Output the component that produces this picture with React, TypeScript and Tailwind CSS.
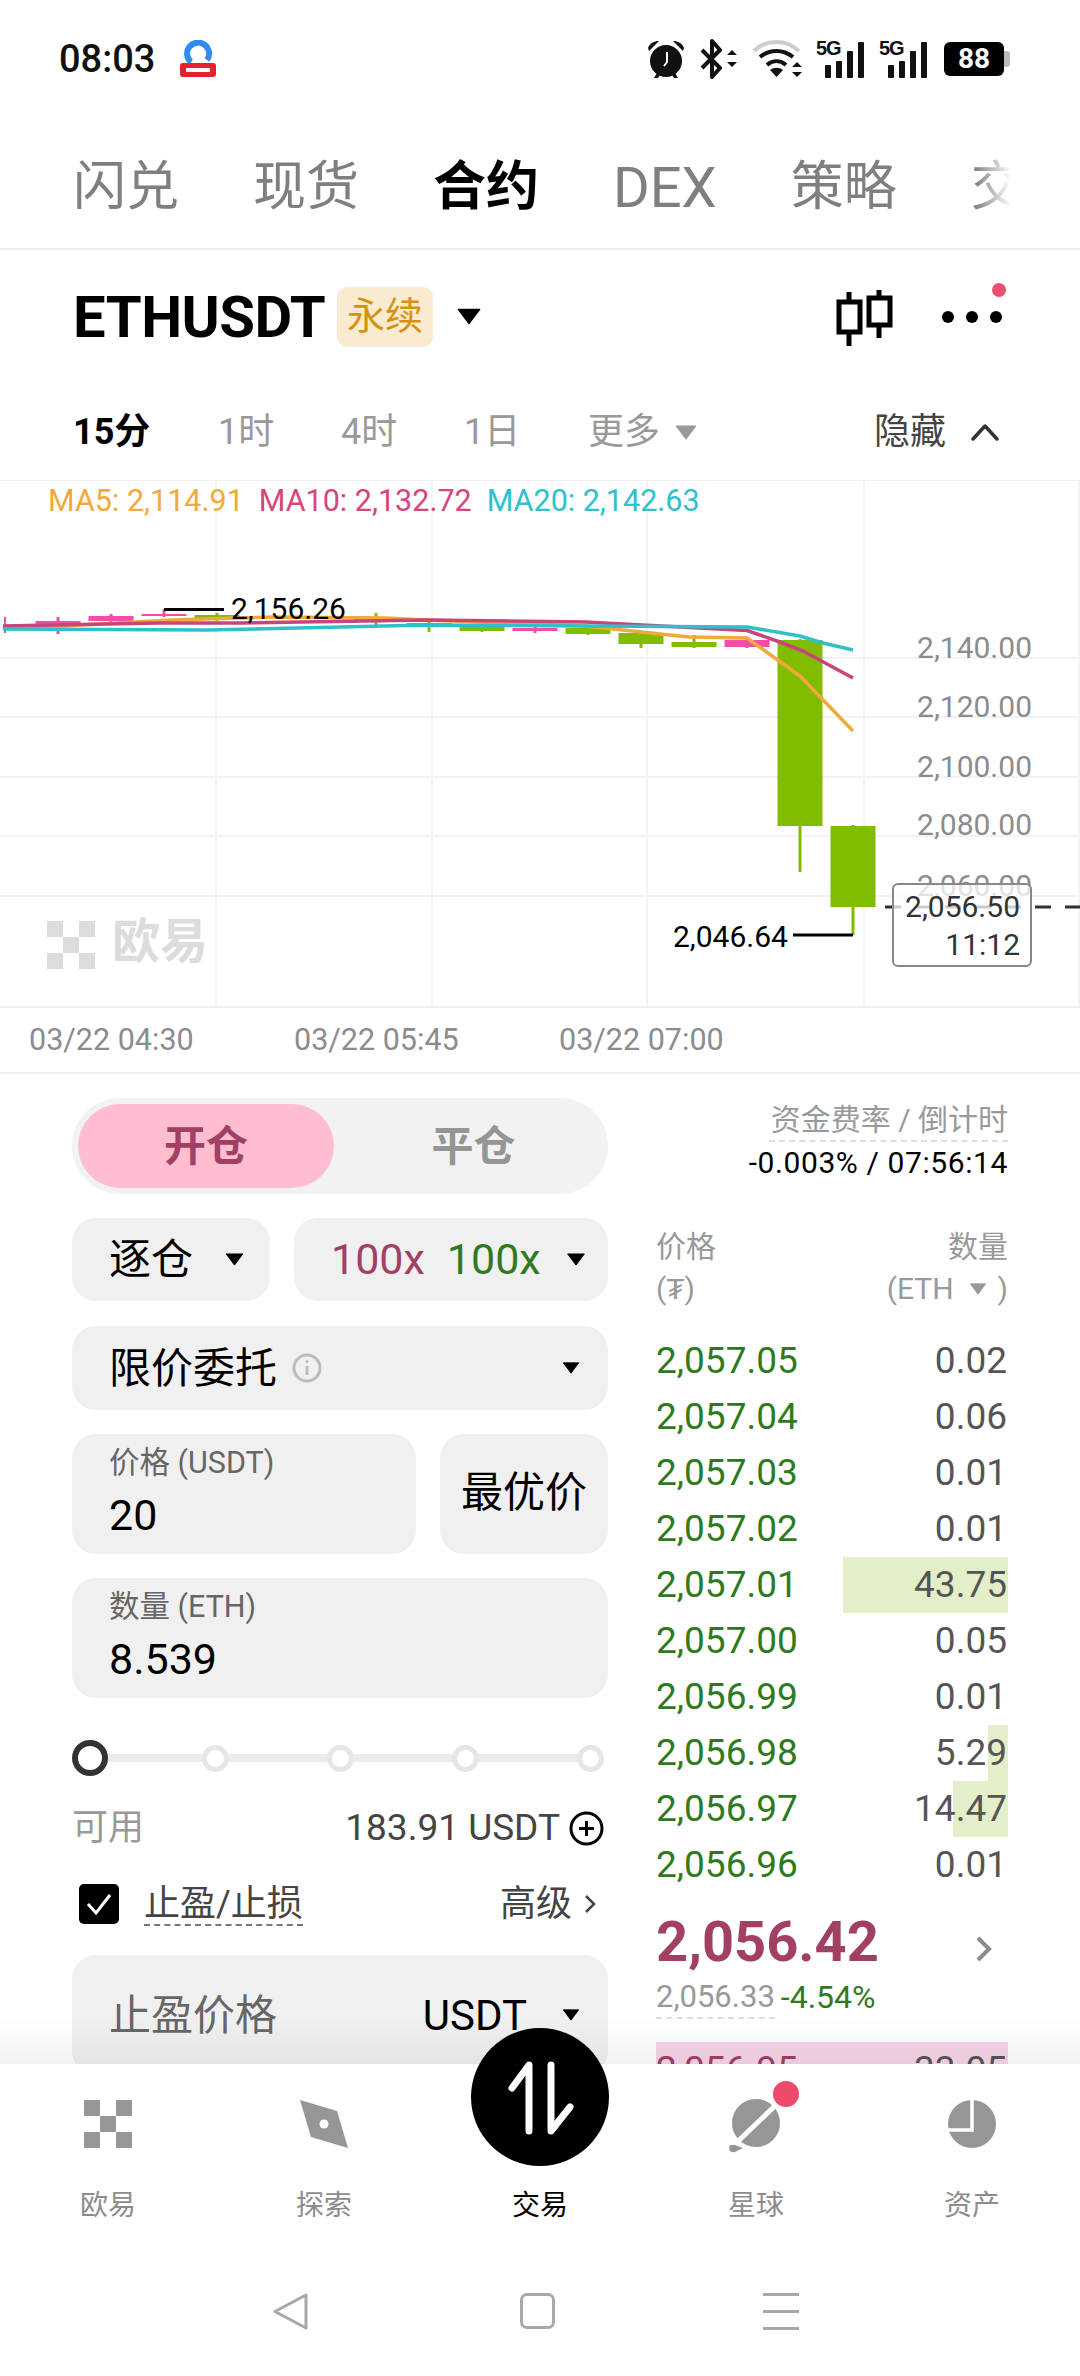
import React from 'react';

const Caret = ({ className = 'w-[20px] h-[14px] text-black' }: { className?: string }) => (
  <svg className={className} viewBox="0 0 20 14" fill="currentColor">
    <path d="M1 1h18L10 13z" stroke="currentColor" strokeLinejoin="round" />
  </svg>
);

const StatusIcons = () => (
  <div className="flex items-center">
    {/* alarm */}
    <svg className="w-[38px] h-[40px]" viewBox="0 0 38 40" fill="#111">
      <circle cx="19" cy="22" r="16" />
      <path d="M1 9c2-5 6-7 11-7L2 12zM37 9c-2-5-6-7-11-7l10 10zM7 39l3-5 3 2-2 3zM31 39l-3-5-3 2 2 3z" />
      <path d="M20 13v10l-3 4" stroke="#fff" strokeWidth="2" fill="none" />
    </svg>
    {/* bluetooth */}
    <svg className="w-[38px] h-[40px] ml-[15px]" viewBox="0 0 38 40" fill="none">
      <path d="M2 11l18 18-8 9V2l8 9L2 29" stroke="#111" strokeWidth="4" strokeLinejoin="round" />
      <path d="M27 16l5-5 5 5zM27 23l5 5 5-5z" fill="#111" />
    </svg>
    {/* wifi */}
    <svg className="w-[52px] h-[40px] ml-[14px]" viewBox="0 0 52 40" fill="none">
      <path d="M2 12C14 0 34 0 47 12" stroke="#ccc" strokeWidth="4" />
      <path d="M8 18c10-8 23-8 33 0" stroke="#111" strokeWidth="4" />
      <path d="M15 26c6-5 13-5 19 0" stroke="#111" strokeWidth="4" />
      <path d="M18 31c4-3 9-3 13 0l-6.500 7z" fill="#111" />
      <path d="M40 28l5-5 5 5zM40 33l5 5 5-5z" fill="#111" />
    </svg>
    {/* 5G signal x 2 */}
    {[0, 1].map((n) => (
      <div key={n} className={`relative w-[48px] h-[38px] ${n === 0 ? 'ml-[12px]' : 'ml-[15px]'}`}>
        <span className="absolute left-0 top-[-3px] text-[20px] leading-[22px] font-bold text-[#111] tracking-[-1px] [font-family:'Liberation_Sans',sans-serif]">5G</span>
        <div className="absolute left-[9px] right-0 bottom-0 flex items-end justify-between">
          <div className="w-[6px] h-[13px] bg-[#111] rounded-[1px]" />
          <div className="w-[6px] h-[17px] bg-[#111] rounded-[1px]" />
          <div className="w-[6px] h-[27px] bg-[#111] rounded-[1px]" />
          <div className="w-[6px] h-[36px] bg-[#111] rounded-[1px]" />
        </div>
      </div>
    ))}
    {/* battery */}
    <div className="flex items-center ml-[17px]">
      <div className="w-[60px] h-[34px] bg-black rounded-[6px] flex items-center justify-center text-white text-[28px] font-bold leading-none">88</div>
      <div className="w-[6px] h-[16px] bg-[#bbb] rounded-r-[3px]" />
    </div>
  </div>
);

const TopTabs = () => (
  <div className="relative h-[145px] border-b-2 border-[#ececec] pl-[73px] overflow-hidden">
    <div className="flex gap-[74px] h-[165px] items-center text-[53px] text-[#7f7f7f] whitespace-nowrap w-[937px] overflow-hidden">
      <span>闪兑</span>
      <span>现货</span>
      <span className="text-black font-bold">合约</span>
      <span className="w-[106px] text-[56px]">DEX</span>
      <span>策略</span>
      <span>交易</span>
    </div>
    <div className="absolute top-0 bottom-0 left-[975px] w-[36px] bg-gradient-to-r from-white/0 to-white" />
  </div>
);

const SymbolRow = () => (
  <div className="relative h-[130px] flex items-center pl-[73px] pt-[3px]">
    <span className="text-[58px] font-bold text-black leading-none tracking-[-0.5px] w-[250px] shrink-0 whitespace-nowrap">ETHUSDT</span>
    <span className="ml-[14px] w-[96px] h-[60px] rounded-[10px] bg-[#f9ebcf] text-[#d4920f] text-[38px] flex items-center justify-center">永续</span>
    <Caret className="ml-[24px] w-[24px] h-[17px] text-black" />
    <svg className="absolute left-[835px] top-[40px] w-[60px] h-[58px]" viewBox="0 0 60 58" fill="none" stroke="#000" strokeWidth="5">
      <path d="M14 2v54M44 0v48" />
      <rect x="4" y="12" width="21" height="30" fill="#fff" />
      <rect x="34" y="8" width="21" height="27" fill="#fff" />
    </svg>
    <div className="absolute left-[942px] top-[61px] flex gap-[12px]">
      <div className="w-[12px] h-[12px] rounded-full bg-black" />
      <div className="w-[12px] h-[12px] rounded-full bg-black" />
      <div className="w-[12px] h-[12px] rounded-full bg-black" />
    </div>
    <div className="absolute left-[992px] top-[33px] w-[14px] h-[14px] rounded-full bg-[#ea4f72]" />
  </div>
);

const TimeRow = () => (
  <div className="h-[100px] flex items-center pl-[73px] pt-[4px] text-[36px] text-[#999] relative">
    <span className="w-[145px] font-bold text-black">15分</span>
    <span className="w-[123px]">1时</span>
    <span className="w-[123px]">4时</span>
    <span className="w-[124px]">1日</span>
    <span>更多</span>
    <Caret className="ml-[14px] w-[24px] h-[15px] text-[#999]" />
    <span className="absolute left-[874px] text-[#444]">隐藏</span>
    <svg className="absolute left-[970px] w-[30px] h-[22px]" viewBox="0 0 30 22" fill="none" stroke="#333" strokeWidth="3.500" strokeLinecap="round" strokeLinejoin="round">
      <path d="M3 18L15 5l12 13" />
    </svg>
  </div>
);

type Candle = { x: number; top: number; bot: number; wt: number; wb: number; up: boolean };

const candles: Candle[] = [
  { x: 58, top: 620, bot: 625, wt: 616, wb: 633, up: false },
  { x: 111, top: 615, bot: 620, wt: 613, wb: 622, up: false },
  { x: 164, top: 613, bot: 615, wt: 608, wb: 616, up: false },
  { x: 217, top: 614, bot: 618, wt: 612, wb: 620, up: true },
  { x: 376, top: 618, bot: 620, wt: 612, wb: 624, up: true },
  { x: 429, top: 622, bot: 625, wt: 620, wb: 631, up: true },
  { x: 482, top: 625, bot: 630, wt: 624, wb: 631, up: true },
  { x: 535, top: 627, bot: 630, wt: 625, wb: 632, up: false },
  { x: 588, top: 627, bot: 633, wt: 626, wb: 634, up: true },
  { x: 641, top: 632, bot: 643, wt: 631, wb: 647, up: true },
  { x: 694, top: 641, bot: 646, wt: 634, wb: 647, up: true },
  { x: 747, top: 639, bot: 646, wt: 637, wb: 647, up: false },
  { x: 800, top: 639, bot: 825, wt: 638, wb: 871, up: true },
  { x: 853, top: 825, bot: 906, wt: 824, wb: 934, up: true },
];

const axisPrices = [
  { label: '2,140.00', cls: 'top-[147px]' },
  { label: '2,120.00', cls: 'top-[206px]' },
  { label: '2,100.00', cls: 'top-[266px]' },
  { label: '2,080.00', cls: 'top-[324px]' },
  { label: '2,060.00', cls: 'top-[385px]' },
];

const Chart = () => (
  <div className="relative h-[526px] border-t border-[#f2f2f2]">
    <svg className="absolute inset-0 w-[1080px] h-[526px]" viewBox="0 480 1080 526">
      {[657, 716, 776, 835, 895].map((y) => (
        <line key={y} x1="0" x2="1080" y1={y} y2={y} stroke="#f2f2f2" strokeWidth="2" />
      ))}
      {[216, 432, 647, 864, 1079].map((x) => (
        <line key={x} x1={x} x2={x} y1="480" y2="1006" stroke="#f4f4f4" strokeWidth="2" />
      ))}
      {candles.map((c) => {
        const color = c.up ? '#82bc00' : '#f54ca8';
        return (
          <g key={c.x} fill={color}>
            <rect x={c.x - 1.5} y={c.wt} width="3" height={c.wb - c.wt} />
            <rect x={c.x - 22.5} y={c.top} width="45" height={c.bot - c.top} />
          </g>
        );
      })}
      <rect x="4" y="616" width="2" height="16" fill="#f54ca8" />
      <path d="M3 625.500L62 625L172 619L275 616L386 617L427 619L585 625L689 636L747 637L800 675L853 730" fill="none" stroke="#f2a93b" strokeWidth="3.500" />
      <path d="M3 625L158 622L241 622L427 619L585 621L747 629.500L777 640L803 650L853 677" fill="none" stroke="#c8457a" strokeWidth="3.500" />
      <path d="M3 628L207 629L427 624L747 626L800 635L823 642L853 649" fill="none" stroke="#2fc0cc" strokeWidth="3.500" />
      <line x1="164" x2="224" y1="608.500" y2="608.500" stroke="#000" strokeWidth="3" />
      <line x1="793" x2="853" y1="934" y2="934" stroke="#000" strokeWidth="3" />
      <line x1="885" x2="1080" y1="906" y2="906" stroke="#333" strokeWidth="3" strokeDasharray="16 14" />
      {/* OKX watermark */}
      <g fill="#dcdcdc">
        <rect x="47" y="920" width="16" height="16" />
        <rect x="79" y="920" width="16" height="16" />
        <rect x="63" y="936" width="16" height="16" />
        <rect x="47" y="952" width="16" height="16" />
        <rect x="79" y="952" width="16" height="16" />
      </g>
    </svg>

    <div className="absolute left-[48px] top-0 h-[40px] flex gap-[15px] text-[30.500px] leading-[40px] whitespace-nowrap">
      <span className="text-[#f2a93b]">MA5: 2,114.91</span>
      <span className="text-[#d9447a]">MA10: 2,132.72</span>
      <span className="text-[#2fc1cc]">MA20: 2,142.63</span>
    </div>

    <span className="absolute left-[231px] top-[108px] text-[30px] leading-[40px] text-black">2,156.26</span>
    <span className="absolute left-[673px] top-[436px] text-[30px] leading-[40px] text-black">2,046.64</span>
    <span className="absolute left-[112px] top-[431px] text-[48px] leading-[60px] font-bold text-[#dcdcdc]">欧易</span>

    {axisPrices.map((p) => (
      <span key={p.label} className={`absolute right-[48px] ${p.cls} text-[30px] leading-[40px] text-[#8c8c8c]`}>{p.label}</span>
    ))}

    <div className="absolute left-[892px] top-[402px] w-[140px] h-[84px] rounded-[6px] border-2 border-[#888] bg-white/75 flex flex-col items-end pr-[10px] text-[30px] leading-[38px] text-[#333]">
      <span className="mt-[3px]">2,056.50</span>
      <span>11:12</span>
    </div>
  </div>
);

const DateAxis = () => (
  <div className="h-[68px] border-t-2 border-b-2 border-[#f0f0f0] relative text-[30.500px] text-[#8c8c8c] flex items-center pl-[29px] gap-[100px] whitespace-nowrap">
    <span className="w-[165px]">03/22 04:30</span>
    <span className="w-[165px]">03/22 05:45</span>
    <span className="w-[165px]">03/22 07:00</span>
  </div>
);

const OrderForm = () => (
  <div className="w-[536px] ml-[72px] pt-[24px] flex flex-col">
    <div className="h-[96px] rounded-full bg-[#f2f2f2] flex items-center p-[6px] text-[42px] font-bold">
      <div className="w-[256px] h-[84px] rounded-full bg-[#ffbdd0] text-[#a23f64] flex items-center justify-center">开仓</div>
      <div className="flex-1 text-center text-[#959595] pl-[11px]">平仓</div>
    </div>

    <div className="mt-[24px] h-[83px] flex gap-[24px]">
      <div className="w-[198px] rounded-[24px] bg-[#f0f0f0] flex items-center pl-[37px] text-[42px] text-black">
        逐仓
        <Caret className="ml-[32px] w-[19px] h-[13px] text-black" />
      </div>
      <div className="flex-1 rounded-[24px] bg-[#f0f0f0] flex items-center pl-[37px] text-[43px]">
        <span className="text-[#a23f64]">100x</span>
        <span className="ml-[22px] text-[#2f7a1f]">100x</span>
        <Caret className="ml-[25px] w-[20px] h-[13px] text-black" />
      </div>
    </div>

    <div className="mt-[25px] h-[84px] rounded-[24px] bg-[#f0f0f0] flex items-center pl-[37px] text-[42px] text-black">
      限价委托
      <svg className="ml-[15px] w-[30px] h-[30px]" viewBox="0 0 30 30" fill="none" stroke="#bcbcbc">
        <circle cx="15" cy="15" r="13" strokeWidth="3" />
        <path d="M15 13v9" strokeWidth="3" />
        <circle cx="15" cy="8.500" r="1.500" fill="#bcbcbc" stroke="none" />
      </svg>
      <Caret className="ml-auto mr-[28px] w-[18px] h-[12px] text-black" />
    </div>

    <div className="mt-[24px] h-[120px] flex gap-[24px]">
      <div className="w-[344px] rounded-[24px] bg-[#f0f0f0] pl-[37px] flex flex-col">
        <span className="mt-[10px] text-[30.500px] leading-[38px] text-[#666]">价格 (USDT)</span>
        <span className="mt-[9px] text-[43px] leading-[48px] text-black">20</span>
      </div>
      <div className="flex-1 rounded-[24px] bg-[#f0f0f0] flex items-center justify-center text-[42px] text-black pb-[4px]">最优价</div>
    </div>

    <div className="mt-[24px] h-[120px] rounded-[24px] bg-[#f0f0f0] pl-[37px] flex flex-col">
      <span className="mt-[10px] text-[30.500px] leading-[38px] text-[#666]">数量 (ETH)</span>
      <span className="mt-[9px] text-[43px] leading-[48px] text-black">8.539</span>
    </div>

    {/* slider */}
    <div className="mt-[42px] h-[36px] relative flex items-center justify-between">
      <div className="absolute left-[10px] right-[10px] h-[8px] bg-[#ebebeb]" />
      <div className="relative w-[36px] h-[36px] rounded-full border-[6px] border-[#333] bg-white" />
      {[0, 1, 2, 3].map((n) => (
        <div key={n} className="relative w-[36px] flex justify-center">
          <div className="w-[27px] h-[27px] rounded-full border-[5px] border-[#e6e6e6] bg-white" />
        </div>
      ))}
    </div>

    <div className="mt-[27px] h-[50px] flex items-center text-[36px]">
      <span className="text-[#999]">可用</span>
      <span className="ml-auto text-[#444] text-[37px]">183.91 USDT</span>
      <svg className="ml-[9px] mr-[4px] w-[35px] h-[35px]" viewBox="0 0 35 35" fill="none" stroke="#000" strokeWidth="3">
        <circle cx="17.500" cy="17.500" r="15.500" />
        <path d="M17.500 10v15M10 17.500h15" />
      </svg>
    </div>

    <div className="mt-[26px] h-[50px] flex items-center text-[36px] text-[#444]">
      <div className="ml-[7px] w-[40px] h-[40px] rounded-[5px] bg-black flex items-center justify-center">
        <svg className="w-[28px] h-[24px]" viewBox="0 0 28 24" fill="none" stroke="#fff" strokeWidth="3">
          <path d="M3 12l8 9L25 3" />
        </svg>
      </div>
      <div className="relative ml-[25px]">
        <span className="leading-[50px]">止盈/止损</span>
        <div className="absolute left-0 right-0 top-[47px] border-t-2 border-dashed border-[#777]" />
      </div>
      <span className="ml-auto">高级</span>
      <svg className="ml-[12px] mr-[12px] w-[12px] h-[20px]" viewBox="0 0 12 20" fill="none" stroke="#444" strokeWidth="2.500">
        <path d="M2 2l8 8-8 8" />
      </svg>
    </div>

    <div className="mt-[26px] h-[120px] shrink-0 rounded-[24px] bg-[#f0f0f0] flex pl-[37px] pt-[32px] text-[42px] leading-[58px]">
      <span className="text-[#666]">止盈价格</span>
      <span className="ml-auto text-black">USDT</span>
      <Caret className="ml-[35px] mr-[28px] mt-[22px] w-[18px] h-[12px] text-black" />
    </div>
  </div>
);

type Level = { price: string; qty: string; bar?: string };

const levels: Level[] = [
  { price: '2,057.05', qty: '0.02' },
  { price: '2,057.04', qty: '0.06' },
  { price: '2,057.03', qty: '0.01' },
  { price: '2,057.02', qty: '0.01' },
  { price: '2,057.01', qty: '43.75', bar: 'w-[165px]' },
  { price: '2,057.00', qty: '0.05' },
  { price: '2,056.99', qty: '0.01' },
  { price: '2,056.98', qty: '5.29', bar: 'w-[20px]' },
  { price: '2,056.97', qty: '14.47', bar: 'w-[55px]' },
  { price: '2,056.96', qty: '0.01' },
];

const OrderBook = () => (
  <div className="ml-[48px] w-[352px] flex flex-col">
    <div className="mt-[26px] flex flex-col items-end">
      <span className="text-[30px] leading-[40px] text-[#999] border-b-2 border-dashed border-[#ddd] pl-[2px]">资金费率 / 倒计时</span>
      <span className="mt-[1px] text-[30px] leading-[40px] text-black tracking-[0.6px]">-0.003% / 07:56:14</span>
    </div>
    <div className="mt-[43px] flex justify-between text-[30px] leading-[42px] text-[#999]">
      <div className="flex flex-col">
        <span>价格</span>
        <span>(₮)</span>
      </div>
      <div className="flex flex-col items-end">
        <span>数量</span>
        <span className="flex items-center">
          (ETH
          <Caret className="ml-[14px] mr-[10px] w-[20px] h-[12px] text-[#999]" />)
        </span>
      </div>
    </div>
    <div className="mt-[23px] flex flex-col">
      {levels.map((l) => (
        <div key={l.price} className="relative h-[56px] flex items-center justify-between text-[37px]">
          {l.bar && <div className={`absolute right-0 top-0 h-[56px] bg-[#e3efc8] ${l.bar}`} />}
          <span className="relative text-[#2f7a1f]">{l.price}</span>
          <span className="relative text-[#555] pr-[1px]">{l.qty}</span>
        </div>
      ))}
    </div>
    <div className="mt-[19px] flex items-center justify-between">
      <span className="text-[56px] leading-[60px] font-bold text-[#a23f64]">2,056.42</span>
      <svg className="mr-[15px] mt-[14px] w-[18px] h-[28px]" viewBox="0 0 18 28" fill="none" stroke="#8c8c8c" strokeWidth="4">
        <path d="M3 3l11 11L3 25" />
      </svg>
    </div>
    <div className="mt-[5px] flex items-center text-[31px] leading-[40px]">
      <span className="text-[#999] border-b-2 border-dashed border-[#ddd]">2,056.33</span>
      <span className="ml-[6px] mb-[2px] text-[#2f7a1f] text-[32px]">-4.54%</span>
    </div>
    <div className="mt-[23px] h-[56px] shrink-0 bg-[#f8d5e9] flex items-center justify-between text-[37px]">
      <span className="text-[#a23f64]">2,056.95</span>
      <span className="text-[#555] pr-[1px]">33.05</span>
    </div>
  </div>
);

const NavItem = ({ label, active, children }: { label: string; active?: boolean; children?: React.ReactNode }) => (
  <div className="flex flex-col items-center">
    <div className="h-[48px] w-[60px] mt-[36px] flex items-center justify-center">{children}</div>
    <span className={`mt-[38px] text-[28px] leading-[40px] ${active ? 'text-black' : 'text-[#8c8c8c]'}`}>{label}</span>
  </div>
);

const BottomNav = () => (
  <div className="absolute left-0 right-0 bottom-0 h-[312px] bg-white">
    <div className="absolute left-0 right-0 bottom-[312px] h-[46px] bg-gradient-to-b from-black/0 to-black/5" />
    <div className="grid grid-cols-5">
      <NavItem label="欧易">
        <svg className="w-[48px] h-[48px]" viewBox="0 0 48 48" fill="#969696">
          <rect x="0" y="0" width="16" height="16" rx="1" />
          <rect x="32" y="0" width="16" height="16" rx="1" />
          <rect x="16" y="16" width="16" height="16" />
          <rect x="0" y="32" width="16" height="16" rx="1" />
          <rect x="32" y="32" width="16" height="16" rx="1" />
        </svg>
      </NavItem>
      <NavItem label="探索">
        <svg className="w-[48px] h-[48px]" viewBox="0 0 48 48">
          <path d="M0 0l37 11 11 37-37-11z" fill="#969696" />
          <circle cx="24" cy="24" r="4.500" fill="#fff" />
        </svg>
      </NavItem>
      <NavItem label="交易" active />
      <NavItem label="星球">
        <svg className="w-[56px] h-[56px] mt-[2px]" viewBox="0 0 56 56">
          <circle cx="28" cy="26" r="24" fill="#969696" />
          <path d="M4 50L50 6" stroke="#fff" strokeWidth="5" />
          <path d="M2 48c-2 5 0 8 5 7l8-4-8-3z" fill="#969696" />
        </svg>
      </NavItem>
      <NavItem label="资产">
        <svg className="w-[48px] h-[48px]" viewBox="0 0 48 48">
          <circle cx="24" cy="24" r="24" fill="#969696" />
          <path d="M24 0v30H0" fill="none" stroke="#fff" strokeWidth="3.500" />
        </svg>
      </NavItem>
    </div>

    {/* overlapping badges */}
    <div className="absolute left-[471px] top-[-36px] w-[138px] h-[138px] rounded-full bg-black flex items-center justify-center">
      <svg className="w-[70px] h-[76px]" viewBox="0 0 70 76" fill="none" stroke="#fff" strokeWidth="7" strokeLinecap="round" strokeLinejoin="round">
        <path d="M24 72V6L7 29" />
        <path d="M46 6v66l19-24" />
      </svg>
    </div>
    <div className="absolute left-[771px] top-[15px] w-[30px] h-[30px] rounded-full bg-[#ee4a6c] border-2 border-white" />

    {/* system buttons */}
    <div className="absolute left-0 right-0 top-[229px] h-[36px]">
      <svg className="absolute left-[272px] w-[38px] h-[37px]" viewBox="0 0 38 37" fill="none" stroke="#a8a8a8" strokeWidth="3" strokeLinejoin="round">
        <path d="M34 2v33L3 18.500z" />
      </svg>
      <div className="absolute left-[520px] w-[35px] h-[36px] rounded-[7px] border-[3px] border-[#a8a8a8]" />
      <div className="absolute left-[763px] w-[36px] h-[37px] flex flex-col justify-between">
        <div className="h-[3px] bg-[#a8a8a8]" />
        <div className="h-[3px] bg-[#a8a8a8]" />
        <div className="h-[3px] bg-[#a8a8a8]" />
      </div>
    </div>
  </div>
);

export default function App() {
  return (
    <div className="relative w-[1080px] h-[2376px] overflow-hidden bg-white [font-family:Roboto,'Noto_Sans_CJK_SC',sans-serif]">
      <div className="h-[105px] flex items-center justify-between pl-[59px] pr-[70px] pt-[12px]">
        <div className="flex items-center">
          <span className="text-[38px] font-medium text-[#111] leading-none">08:03</span>
          <svg className="ml-[24px] w-[38px] h-[38px]" viewBox="0 0 38 38">
            <path d="M12 22A11 11 0 1 1 28 20" fill="none" stroke="#2f8cf0" strokeWidth="6" />
            <rect x="1" y="23" width="36" height="14" rx="3" fill="#e8202e" />
            <rect x="7" y="28" width="24" height="4" fill="#fff" />
          </svg>
        </div>
        <StatusIcons />
      </div>
      <TopTabs />
      <SymbolRow />
      <TimeRow />
      <Chart />
      <DateAxis />
      <div className="flex">
        <OrderForm />
        <OrderBook />
      </div>
      <BottomNav />
    </div>
  );
}
